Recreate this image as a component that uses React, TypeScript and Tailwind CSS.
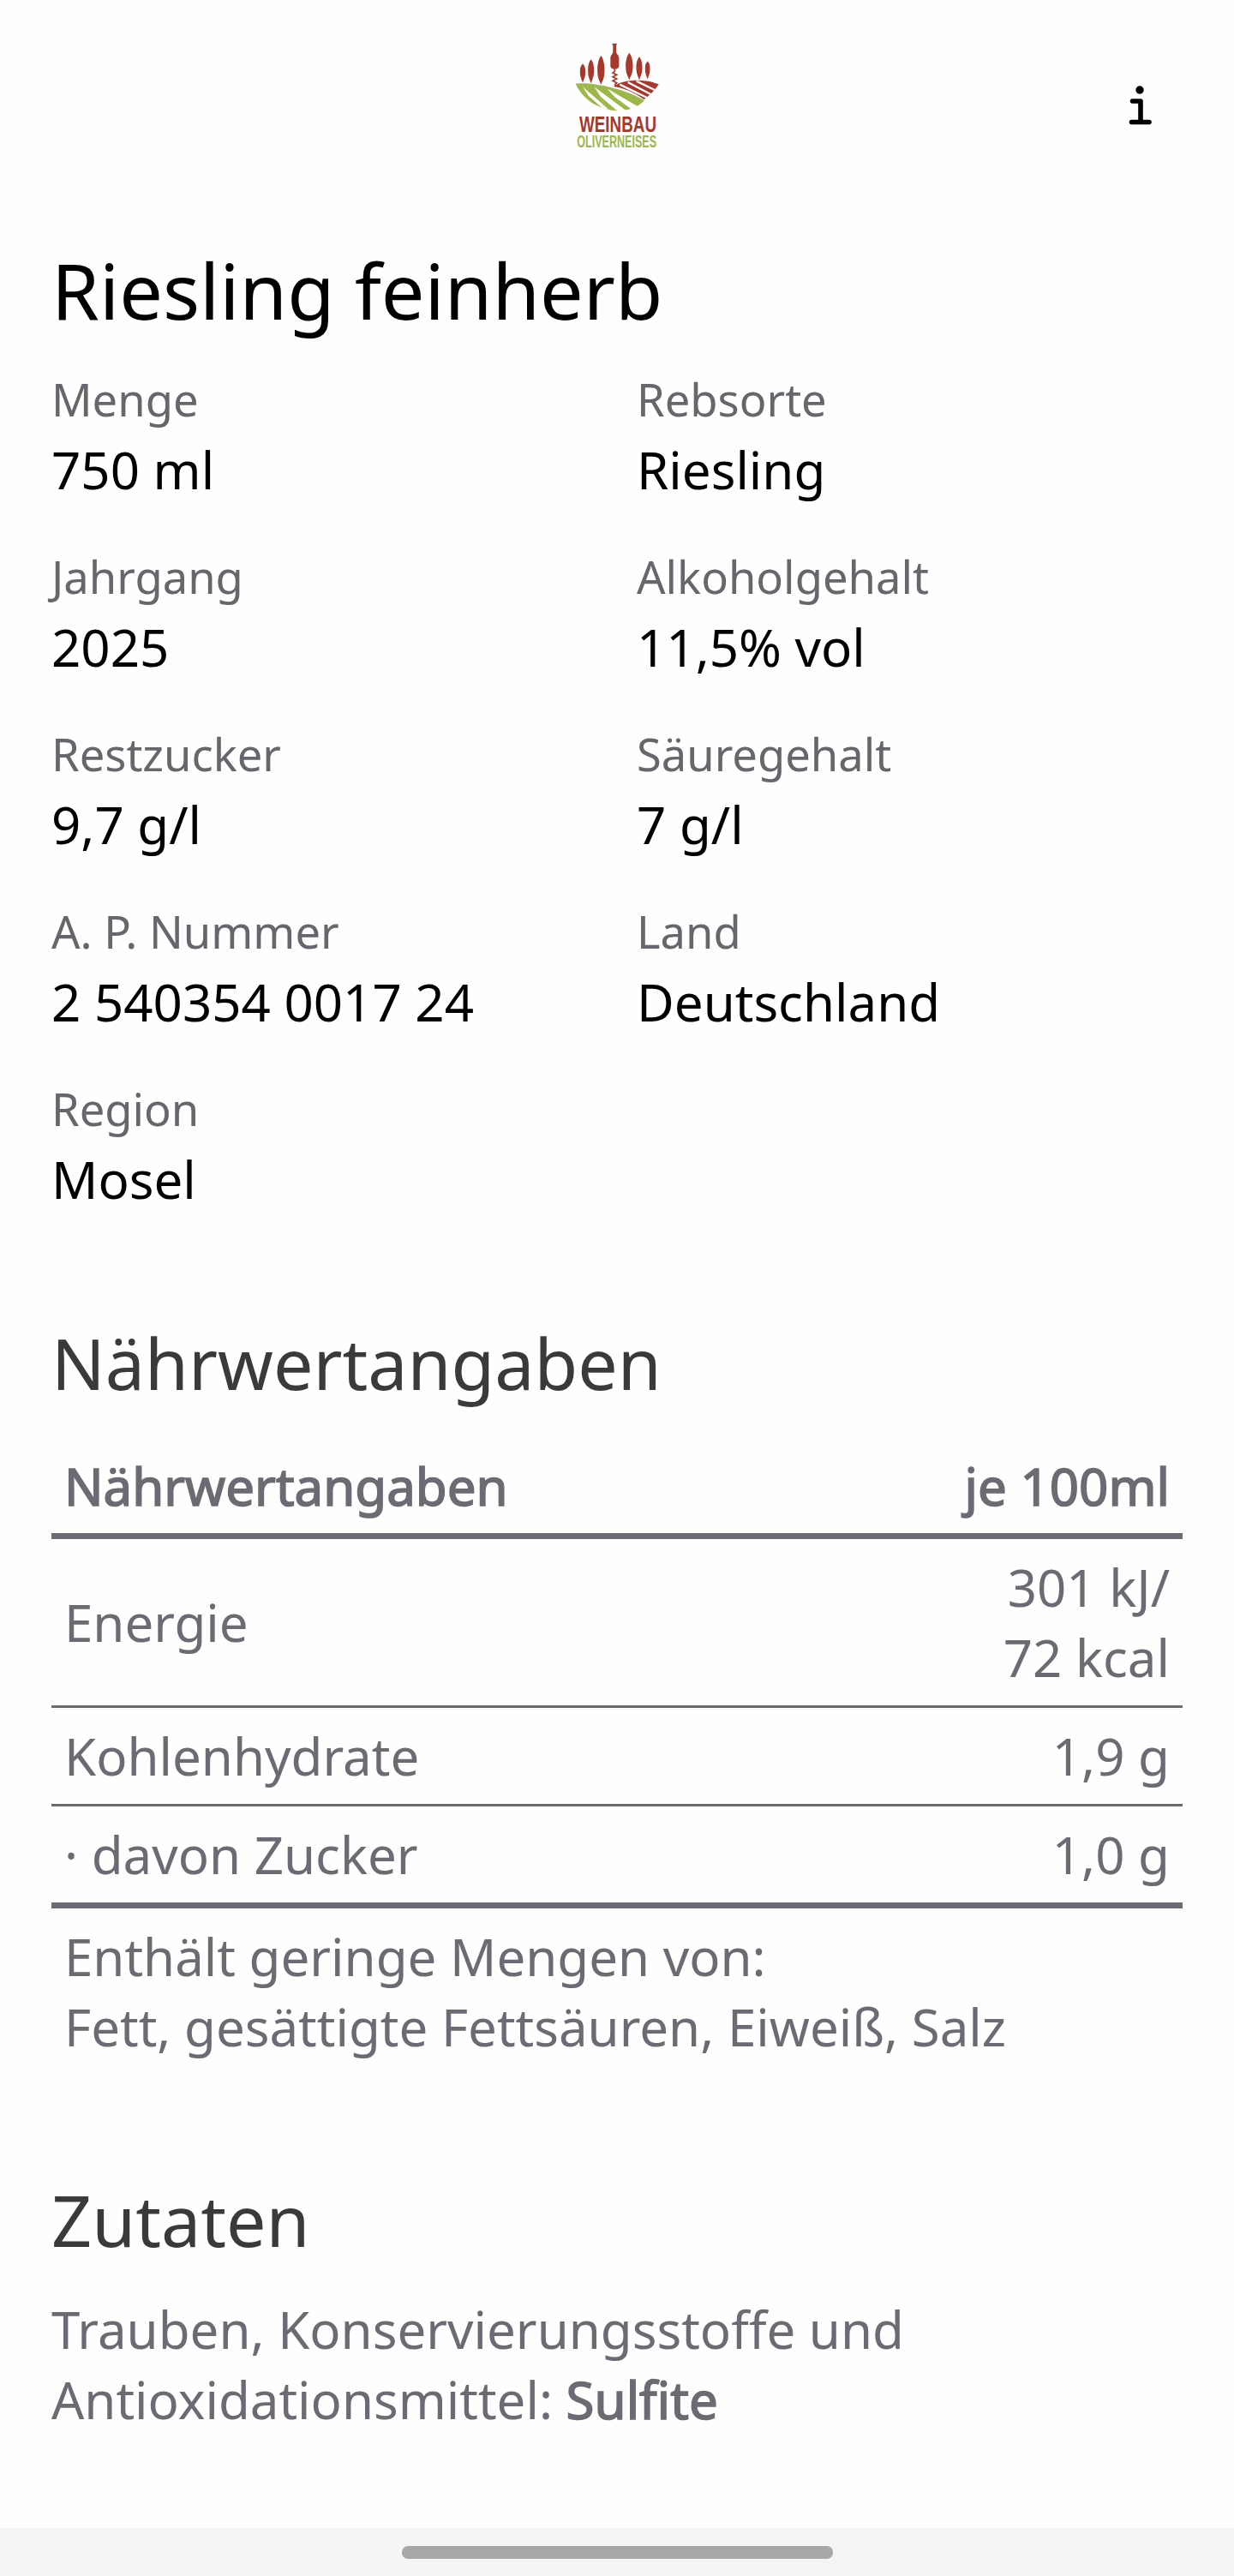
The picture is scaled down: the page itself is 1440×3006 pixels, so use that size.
const FONT = "font-['Noto_Sans',sans-serif]";

const FACTS = [
  ["Menge", "750 ml"],
  ["Rebsorte", "Riesling"],
  ["Jahrgang", "2025"],
  ["Alkoholgehalt", "11,5% vol"],
  ["Restzucker", "9,7 g/l"],
  ["Säuregehalt", "7 g/l"],
  ["A. P. Nummer", "2 540354 0017 24"],
  ["Land", "Deutschland"],
  ["Region", "Mosel"],
];

const RED = "#a8372c";
const GREEN = "#9cb84a";

function Cypress({ x, top, bottom, w }: { x: number; top: number; bottom: number; w: number }) {
  const mid = top + (bottom - top) * 0.55;
  return (
    <path
      d={`M${x} ${top}C${x + w * 0.3} ${top + 8} ${x + w / 2} ${mid - 20} ${x + w / 2} ${mid}C${x + w / 2} ${bottom - 8} ${x + 3} ${bottom} ${x + 1} ${bottom + 10}L${x - 1} ${bottom + 10}C${x - 3} ${bottom} ${x - w / 2} ${bottom - 8} ${x - w / 2} ${mid}C${x - w / 2} ${mid - 20} ${x - w * 0.3} ${top + 8} ${x} ${top}Z`}
      fill={RED}
    />
  );
}

function Logo() {
  return (
    <svg width="160" height="160" viewBox="0 0 480 480" aria-hidden="true" className="overflow-visible">
      <Cypress x={120} top={133} bottom={188} w={19} />
      <Cypress x={149} top={118} bottom={190} w={21} />
      <Cypress x={184} top={105} bottom={195} w={25} />
      <Cypress x={283} top={95} bottom={178} w={25} />
      <Cypress x={318} top={109} bottom={178} w={21} />
      <Cypress x={347} top={124} bottom={176} w={17} />
      {/* bottle and corkscrew */}
      <path
        d="M224 62h15v6h-2v22c0 10 10 12 10 24v26c0 8-8 12-15 12s-15-4-15-12v-26c0-12 9-14 9-24V68h-2z"
        fill={RED}
      />
      <path
        d="M232 152v8l-7 5 14 7-14 7 14 7-14 7 14 7-8 8"
        fill="none"
        stroke={RED}
        strokeWidth="5"
      />
      {/* red field */}
      <path d="M228 213C262 186 340 186 386 205C372 228 352 246 334 258C300 232 262 218 228 213Z" fill={RED} />
      <path
        d="M250 206L345 252M278 198L358 240M308 194L372 225"
        fill="none"
        stroke="#fefefe"
        strokeWidth="7"
      />
      {/* green field */}
      <path d="M95 203C150 196 270 220 336 262C300 300 240 306 190 288C140 270 110 236 95 203Z" fill={GREEN} />
      <path
        d="M120 214L212 294L188 288L140 245ZM160 214L276 300L246 302L184 250ZM205 220L312 282L290 292L232 250Z"
        fill="#fefefe"
      />
      <text
        x="108"
        y="372"
        textLength="270"
        lengthAdjust="spacingAndGlyphs"
        fontFamily="Liberation Sans, sans-serif"
        fontWeight="700"
        fontSize="78"
        fill={RED}
      >
        WEINBAU
      </text>
      <text
        x="100"
        y="427"
        textLength="278"
        lengthAdjust="spacingAndGlyphs"
        fontFamily="Liberation Sans, sans-serif"
        fontWeight="700"
        fontSize="58"
        fill={GREEN}
      >
        OLIVERNEISES
      </text>
    </svg>
  );
}

function InfoIcon() {
  return (
    <svg width="100" height="80" viewBox="0 0 100 80" aria-hidden="true">
      <circle cx="50" cy="25" r="4.7" fill="#000" />
      <path
        d="M41.5 38H51V62M40.5 62.5H61"
        fill="none"
        stroke="#000"
        strokeWidth="5.6"
        strokeLinecap="round"
        strokeLinejoin="round"
      />
    </svg>
  );
}

function Row({ label, value, last }: { label: string; value: React.ReactNode; last?: boolean }) {
  return (
    <div
      className={`flex items-center justify-between px-[15px] py-[15px] ${
        last ? "border-b-[7px] border-[#6b6b73]" : "border-b-[3px] border-[#6b6b73]"
      }`}
    >
      <span>{label}</span>
      <span className="text-right">{value}</span>
    </div>
  );
}

export default function App() {
  return (
    <div className={`${FONT} flex min-h-[3006px] flex-col bg-[#fefefe] text-[60px] leading-[82px] text-black`}>
      <main className="flex-1">
        <header className="relative flex h-[277px] justify-center pt-[30px]">
          <Logo />
          <div className="absolute left-[1280px] top-[80px]">
            <InfoIcon />
          </div>
        </header>

        <div className="px-[60px]">
          <h1 className="text-[90px] leading-[122px]">Riesling feinherb</h1>

          <div className="mt-[26px] grid grid-cols-[683px_1fr] gap-y-[43px]">
            {FACTS.map(([label, value]) => (
              <div key={label}>
                <div className="text-[52.5px] text-[#66666c]">{label}</div>
                <div>{value}</div>
              </div>
            ))}
          </div>

          <h2 className="mt-[117px] text-[82.5px] leading-[112px] text-[#3a3a3c]">Nährwertangaben</h2>

          <div className="mt-[47px] text-[#6b6b73]">
            <div className="flex justify-between border-b-[7px] border-[#6b6b73] px-[15px] pb-[14px] [-webkit-text-stroke:1.6px_#6b6b73]">
              <span>Nährwertangaben</span>
              <span>je 100ml</span>
            </div>
            <Row
              label="Energie"
              value={
                <>
                  301 kJ/
                  <br />
                  72 kcal
                </>
              }
            />
            <Row label="Kohlenhydrate" value="1,9 g" />
            <Row label="· davon Zucker" value="1,0 g" last />
            <p className="px-[15px] pt-[15px]">
              Enthält geringe Mengen von:
              <br />
              Fett, gesättigte Fettsäuren, Eiweiß, Salz
            </p>
          </div>

          <h2 className="mt-[128px] text-[82.5px] leading-[112px] text-[#3a3a3c]">Zutaten</h2>

          <p className="mt-[31px] text-[#6b6b73]">
            Trauben, Konservierungsstoffe und
            <br />
            Antioxidationsmittel: <span className="[-webkit-text-stroke:1.6px_#6b6b73]">Sulfite</span>
          </p>
        </div>
      </main>

      <footer className="flex h-[56px] justify-center bg-[#f5f5f5] pt-[21px]">
        <div className="h-[15px] w-[503px] rounded-[7px] bg-[#a8a8a8]" />
      </footer>
    </div>
  );
}
